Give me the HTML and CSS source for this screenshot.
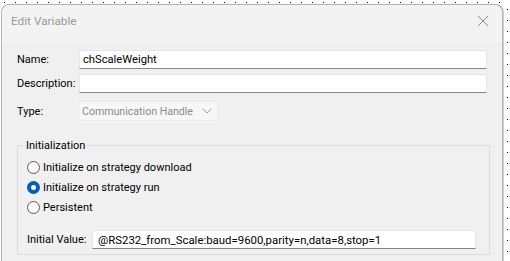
FILE: index.html
```html
<!DOCTYPE html>
<html lang="en">
<head>
    <meta charset="UTF-8">
    <meta name="viewport" content="width=device-width, initial-scale=1.0">
    <title>Edit Variable</title>
    <link rel="stylesheet" href="styles.css">
</head>
<body>

<div class="canvas">
    <div class="dialog">
        <!-- Barra de título -->
        <div class="title-bar">
            <span class="title">Edit Variable</span>
            <svg class="close" width="12" height="12" viewBox="0 0 12 12">
                <path d="M1 1 L11 11 M11 1 L1 11" stroke="#8a8a8a" stroke-width="1" fill="none"/>
            </svg>
        </div>

        <div class="dialog-body">
            <div class="form-row">
                <label class="field-label">Name:</label>
                <input class="text-input" type="text" value="chScaleWeight">
            </div>
            <div class="form-row">
                <label class="field-label">Description:</label>
                <input class="text-input" type="text" value="">
            </div>
            <div class="form-row type-row">
                <label class="field-label">Type:</label>
                <div class="select-box">
                    <span>Communication Handle</span>
                    <svg width="10" height="6" viewBox="0 0 10 6">
                        <path d="M0.5 0.5 L5 5 L9.5 0.5" stroke="#a0a0a0" stroke-width="1" fill="none"/>
                    </svg>
                </div>
            </div>

            <!-- Grupo de inicialización -->
            <fieldset class="group">
                <legend>Initialization</legend>
                <label class="radio-row"><input type="radio" name="init"> Initialize on strategy download</label>
                <label class="radio-row"><input type="radio" name="init" checked> Initialize on strategy run</label>
                <label class="radio-row"><input type="radio" name="init"> Persistent</label>

                <div class="initial-row">
                    <label class="initial-label">Initial Value:</label>
                    <input class="text-input initial-input" type="text" value="@RS232_from_Scale:baud=9600,parity=n,data=8,stop=1">
                </div>
            </fieldset>
        </div>
    </div>
</div>

</body>
</html>
```

FILE: styles.css
```css
body {
    margin: 0;
    font-family: Roboto, Arial, sans-serif;
    font-size: 11px;
    color: #000;
    background-color: #fff;
    overflow: hidden;
}
.canvas {
    width: 510px;
    height: 261px;
    padding-top: 4px;
    padding-left: 1px;
    box-sizing: border-box;
    background-image:
        linear-gradient(to right, #000 1px, transparent 1px),
        linear-gradient(to bottom, #000 1px, transparent 1px);
    background-size: 11px 1px, 1px 11px;
    background-repeat: repeat-x, repeat-y;
    background-position: 4px 2px, 507px 9px;
}
.dialog {
    width: 502px;
    height: 257px;
    border: 1px solid #b4b4b4;
    border-bottom: none;
    border-radius: 8px 8px 0 0;
    background-color: #f0f0f0;
    box-shadow: 1px 0 0 #cfcfcf;
    box-sizing: border-box;
    overflow: hidden;
}
.title-bar {
    height: 38px;
    display: flex;
    align-items: center;
    justify-content: space-between;
    padding: 0 9px 6px 9px;
    box-sizing: border-box;
    background-color: #f3f3f3;
    border-radius: 8px 8px 0 0;
}
.title {
    color: #9a9a9a;
    font-size: 11.8px;
}
.close {
    margin-right: 4px;
}
.dialog-body {
    padding: 7px 14px 0 15px;
}
.form-row {
    display: flex;
    align-items: center;
    margin-bottom: 5px;
}
.type-row {
    margin-top: 8px;
}
.field-label {
    width: 62px;
    flex-shrink: 0;
    white-space: nowrap;
}
.text-input {
    width: 408px;
    height: 19px;
    box-sizing: border-box;
    border: 1px solid #e6e6e6;
    border-bottom-color: #868686;
    background-color: #fff;
    padding: 0 3px;
    font-family: inherit;
    font-size: 11.2px;
    color: #000;
    outline: none;
}
.select-box {
    width: 139px;
    height: 20px;
    box-sizing: border-box;
    display: flex;
    align-items: center;
    justify-content: space-between;
    padding: 0 5px 0 2px;
    background-color: #f7f7f7;
    border: 1px solid #ececec;
    color: #8a8a8a;
    font-size: 10.6px;
    white-space: nowrap;
}
.select-box svg {
    flex-shrink: 0;
}
/* Caja de grupo */
.group {
    margin: 18px 0 0 0;
    padding: 5px 0 5px 0;
    width: 473px;
    min-inline-size: 0;
    box-sizing: border-box;
    border: 1px solid #dcdcdc;
}
.group legend {
    padding: 0 2px;
    margin-left: 6px;
}
.radio-row {
    display: flex;
    align-items: center;
    height: 20px;
    padding-left: 9px;
    white-space: nowrap;
}
.radio-row input {
    appearance: none;
    -webkit-appearance: none;
    width: 13px;
    height: 13px;
    margin: 0 3px 0 0;
    border: 1px solid #5a5a5a;
    border-radius: 50%;
    background-color: #f9f9f9;
    box-sizing: border-box;
}
.radio-row input:checked {
    border: 4px solid #005fb8;
    background-color: #fff;
}
.initial-row {
    display: flex;
    align-items: center;
    margin-top: 13px;
    padding-left: 9px;
}
.initial-label {
    width: 65px;
    flex-shrink: 0;
    white-space: nowrap;
}
.initial-input {
    width: 384px;
    padding: 0 5px;
    font-size: 11.4px;
}
```
